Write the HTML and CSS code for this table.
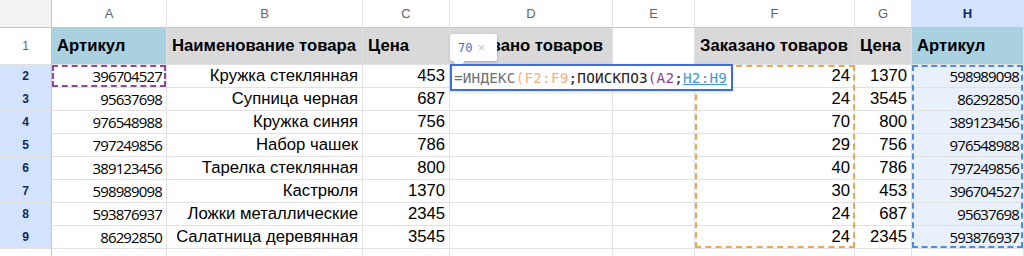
FILE: index.html
```html
<!DOCTYPE html>
<html lang="ru">
<head>
<meta charset="utf-8">
<link rel="stylesheet" href="styles.css">
</head>
<body>
<div class="wrap">
<div class="sheet">
  <div class="corner"></div>
  <div class="colhdr">A</div>
  <div class="colhdr">B</div>
  <div class="colhdr">C</div>
  <div class="colhdr">D</div>
  <div class="colhdr">E</div>
  <div class="colhdr">F</div>
  <div class="colhdr">G</div>
  <div class="colhdr sel">H</div>

  <div class="rowhdr plain">1</div>
  <div class="cell head blue">Артикул</div>
  <div class="cell head gray">Наименование товара</div>
  <div class="cell head gray">Цена</div>
  <div class="cell head gray">Заказано товаров</div>
  <div class="cell head"></div>
  <div class="cell head gray">Заказано товаров</div>
  <div class="cell head gray">Цена</div>
  <div class="cell head blue">Артикул</div>

  <div class="rowhdr">2</div>
  <div class="cell num os">396704527</div>
  <div class="cell num">Кружка стеклянная</div>
  <div class="cell num">453</div>
  <div class="cell editcell">
    <div class="tip"><span class="tipnum">70</span><span class="tipx">×</span></div>
    <div class="editor"><span class="f-g">=ИНДЕКС</span><span class="f-o">(F2:F9</span><span class="f-d">;ПОИСКПОЗ</span><span class="f-p">(A2</span><span class="f-d">;</span><span class="f-b">H2:H9</span></div>
  </div>
  <div class="cell"></div>
  <div class="cell num">24</div>
  <div class="cell num">1370</div>
  <div class="cell num os hl">598989098</div>

  <div class="rowhdr">3</div>
  <div class="cell num os">95637698</div>
  <div class="cell num">Супница черная</div>
  <div class="cell num">687</div>
  <div class="cell"></div>
  <div class="cell"></div>
  <div class="cell num">24</div>
  <div class="cell num">3545</div>
  <div class="cell num os hl">86292850</div>

  <div class="rowhdr">4</div>
  <div class="cell num os">976548988</div>
  <div class="cell num">Кружка синяя</div>
  <div class="cell num">756</div>
  <div class="cell"></div>
  <div class="cell"></div>
  <div class="cell num">70</div>
  <div class="cell num">800</div>
  <div class="cell num os hl">389123456</div>

  <div class="rowhdr">5</div>
  <div class="cell num os">797249856</div>
  <div class="cell num">Набор чашек</div>
  <div class="cell num">786</div>
  <div class="cell"></div>
  <div class="cell"></div>
  <div class="cell num">29</div>
  <div class="cell num">756</div>
  <div class="cell num os hl">976548988</div>

  <div class="rowhdr">6</div>
  <div class="cell num os">389123456</div>
  <div class="cell num">Тарелка стеклянная</div>
  <div class="cell num">800</div>
  <div class="cell"></div>
  <div class="cell"></div>
  <div class="cell num">40</div>
  <div class="cell num">786</div>
  <div class="cell num os hl">797249856</div>

  <div class="rowhdr">7</div>
  <div class="cell num os">598989098</div>
  <div class="cell num">Кастрюля</div>
  <div class="cell num">1370</div>
  <div class="cell"></div>
  <div class="cell"></div>
  <div class="cell num">30</div>
  <div class="cell num">453</div>
  <div class="cell num os hl">396704527</div>

  <div class="rowhdr">8</div>
  <div class="cell num os">593876937</div>
  <div class="cell num">Ложки металлические</div>
  <div class="cell num">2345</div>
  <div class="cell"></div>
  <div class="cell"></div>
  <div class="cell num">24</div>
  <div class="cell num">687</div>
  <div class="cell num os hl">95637698</div>

  <div class="rowhdr">9</div>
  <div class="cell num os">86292850</div>
  <div class="cell num">Салатница деревянная</div>
  <div class="cell num">3545</div>
  <div class="cell"></div>
  <div class="cell"></div>
  <div class="cell num">24</div>
  <div class="cell num">2345</div>
  <div class="cell num os hl">593876937</div>

  <div class="rowhdr plain"></div>
  <div class="cell"></div>
  <div class="cell"></div>
  <div class="cell"></div>
  <div class="cell"></div>
  <div class="cell"></div>
  <div class="cell"></div>
  <div class="cell"></div>
  <div class="cell"></div>
</div>
<div class="ranges">
  <div class="range range-a"></div>
  <div class="range range-f"></div>
  <div class="range range-h"></div>
</div>
</div>
</body>
</html>
```

FILE: styles.css
```css
* { box-sizing: border-box; }
html, body { margin: 0; padding: 0; background: #fff; overflow: hidden; }
body { font-family: "Liberation Sans", Arial, sans-serif; color: #000; }

.wrap {
  position: relative;
  width: 1024px;
  height: 256px;
  overflow: hidden;
}

.sheet, .ranges {
  display: grid;
  grid-template-columns: 52px 115px 196px 87px 163px 82px 160px 57px 112px;
  grid-template-rows: 28px 37px repeat(8, 23px) 23px;
  width: 1024px;
}

.ranges {
  position: absolute;
  inset: 0;
  pointer-events: none;
  z-index: 2;
}

.corner {
  background: #f3f3f3;
  border-right: 1px solid #c4c4c4;
  border-bottom: 1px solid #c4c4c4;
}

.colhdr {
  display: flex;
  align-items: center;
  justify-content: center;
  font-size: 13px;
  color: #5f6368;
  background: #fff;
  border-right: 1px solid #e1e1e1;
  border-bottom: 1px solid #c4c4c4;
}
.colhdr.sel {
  background: #d3e3fd;
  color: #0b2a66;
  font-weight: bold;
}

.rowhdr {
  display: flex;
  align-items: center;
  justify-content: center;
  font-size: 12px;
  font-weight: bold;
  color: #0b2a66;
  background: #d3e3fd;
  border-right: 1px solid #c4c4c4;
  border-bottom: 1px solid #e1e1e1;
}
.rowhdr.plain {
  background: #fff;
  color: #5f6368;
  font-weight: normal;
}

.cell {
  display: flex;
  align-items: center;
  padding: 0 4px;
  font-size: 16.7px;
  white-space: nowrap;
  border-right: 1px solid #e1e1e1;
  border-bottom: 1px solid #e1e1e1;
  background: #fff;
  min-width: 0;
}
.cell.head {
  font-weight: bold;
  padding-left: 5px;
}
.cell.gray { background: #d9d9d9; }
.cell.blue { background: #a9d1df; }
.cell.num { justify-content: flex-end; }
.cell.os { font-family: "Open Sans", sans-serif; font-size: 15px; letter-spacing: -0.85px; }
.cell.hl { background: #e8f0fb; }

.editcell {
  position: relative;
  overflow: visible;
  z-index: 3;
  padding: 0;
}

.editor {
  position: absolute;
  left: 0;
  top: -1px;
  width: 283px;
  height: 27px;
  background: #fff;
  border: 2px solid #3d6fd6;
  padding: 0 0 0 2px;
  display: flex;
  align-items: center;
  font-family: "DejaVu Sans Mono", monospace;
  font-size: 14.3px;
  letter-spacing: 0.2px;
  white-space: nowrap;
  box-shadow: 0 1px 3px rgba(0,0,0,0.15);
}
.f-g { color: #6f6f6f; }
.f-o { color: #f3b27c; }
.f-d { color: #222; }
.f-p { color: #8a3e9a; }
.f-b { color: #3e9ad0; text-decoration: underline; }

.tip {
  position: absolute;
  left: 0;
  top: -31px;
  width: 47px;
  height: 27px;
  background: #fff;
  box-shadow: 0 1px 3px rgba(0,0,0,0.25);
  border-radius: 2px;
  display: flex;
  align-items: center;
  gap: 5px;
  padding-left: 8px;
  font-family: "DejaVu Sans Mono", monospace;
  font-size: 12px;
}
.tip::after {
  content: "";
  position: absolute;
  left: 5px;
  bottom: -5px;
  width: 8px;
  height: 8px;
  background: #fff;
  transform: rotate(45deg);
  box-shadow: 1px 1px 1px rgba(0,0,0,0.12);
}
.tipnum { color: #3b6fd3; }
.tipx { color: #c4c4c4; font-family: "Liberation Sans", sans-serif; font-size: 13px; }

.range-a {
  grid-column: 2;
  grid-row: 3;
  border: 2px dashed #8b4a9e;
  margin: 0 1px 1px 0;
}
.range-f {
  grid-column: 7;
  grid-row: 3 / 11;
  border: 2px dashed #f0a650;
  margin: 0 0 1px 0;
}
.range-h {
  grid-column: 9;
  grid-row: 3 / 11;
  border: 2px dashed #4f8be0;
  margin: 0 1px 1px 0;
}
```
